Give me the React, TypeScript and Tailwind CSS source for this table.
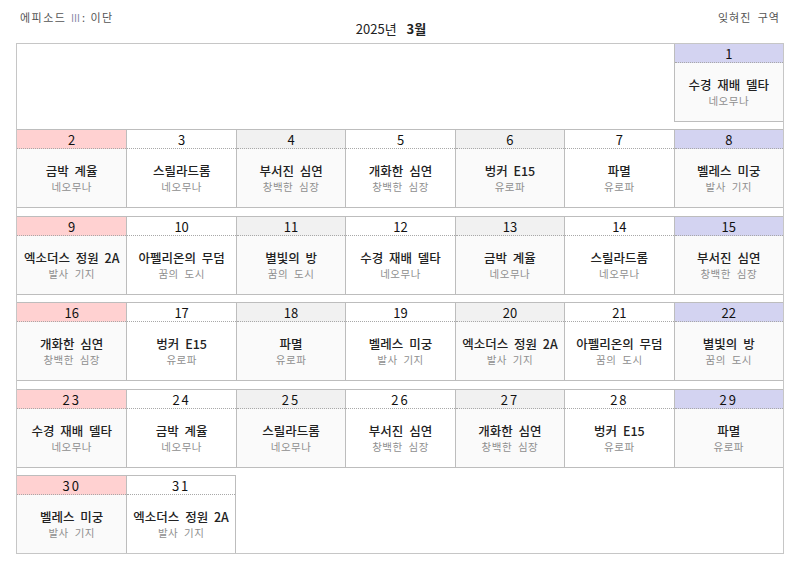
import React from 'react';

const PLACES: { name: string; area: string }[] = [
  { name: '수경 재배 델타', area: '네오무나' },
  { name: '금박 계율', area: '네오무나' },
  { name: '스릴라드롬', area: '네오무나' },
  { name: '부서진 심연', area: '창백한 심장' },
  { name: '개화한 심연', area: '창백한 심장' },
  { name: '벙커 E15', area: '유로파' },
  { name: '파멸', area: '유로파' },
  { name: '벨레스 미궁', area: '발사 기지' },
  { name: '엑소더스 정원 2A', area: '발사 기지' },
  { name: '아펠리온의 무덤', area: '꿈의 도시' },
  { name: '별빛의 방', area: '꿈의 도시' },
];

// March 2025 starts on Saturday
const FIRST_COL = 6;
const DAYS = 31;

const headBg = (col: number) => {
  if (col === 0) return 'bg-[#ffd1d1]';
  if (col === 6) return 'bg-[#d3d3f1]';
  if (col === 2 || col === 4) return 'bg-[#f1f1f1]';
  return 'bg-white';
};

interface DayCellProps {
  day: number;
  col: number;
  firstRow: boolean;
  lastRow: boolean;
  lastDay: boolean;
}

const DayCell: React.FC<DayCellProps> = ({ day, col, firstRow, lastRow, lastDay }) => {
  const place = PLACES[(day - 1) % PLACES.length];
  const tinted = col % 2 === 0;
  return (
    <div
      className={`flex flex-col border-[#bdbdbd] ${firstRow ? '' : 'border-t'} ${lastRow ? '' : 'border-b'} ${
        col > 0 ? 'border-l' : ''
      } ${lastDay && col < 6 ? 'border-r' : ''}`}
    >
      <div
        className={`h-[19px] pt-px flex items-center justify-center text-[13px] leading-none text-[#111] border-b border-dotted border-[#a8a8a8] ${headBg(col)} ${
          day >= 23 ? 'tracking-[2px]' : ''
        }`}
      >
        {day}
      </div>
      <div className={`flex-1 flex flex-col items-center justify-center ${tinted ? 'bg-[#fafafa]' : 'bg-white'}`}>
        <div className="text-[12.5px] leading-[17px] font-medium text-[#222] [word-spacing:3px] whitespace-nowrap">
          {place.name}
        </div>
        <div className="text-[10.5px] leading-[15px] text-[#8f8f8f] tracking-[0.5px] [word-spacing:3px] whitespace-nowrap">
          {place.area}
        </div>
      </div>
    </div>
  );
};

const App: React.FC = () => {
  const slots: (number | null)[] = [];
  for (let i = 0; i < FIRST_COL; i++) slots.push(null);
  for (let d = 1; d <= DAYS; d++) slots.push(d);
  while (slots.length % 7 !== 0) slots.push(null);

  const weeks: (number | null)[][] = [];
  for (let i = 0; i < slots.length; i += 7) weeks.push(slots.slice(i, i + 7));

  return (
    <div className="w-[800px] h-[566px] bg-white font-['Noto_Sans_CJK_KR','Noto_Sans',sans-serif]">
      <div className="h-[43px] grid grid-cols-[1fr_auto_1fr] px-5">
        <div className="pt-[9px] text-[11px] text-[#555] tracking-[1.5px]">
          에피소드 <span className="text-[#8a8aa8] text-[10px]">Ⅲ</span>: 이단
        </div>
        <div className="pt-[19px] pr-[18px] flex items-baseline gap-[10px] text-[13px] text-[#222]">
          <span>2025년</span>
          <span className="font-bold">3월</span>
        </div>
        <div className="pt-[9px] text-right text-[11px] text-[#555] tracking-[1px] [word-spacing:3px]">잊혀진 구역</div>
      </div>

      <div className="ml-4 w-[768px] h-[511px] border border-[#c6c6c6] flex flex-col justify-between">
        {weeks.map((week, wi) => (
          <div key={wi} className={`grid grid-cols-7 ${wi === 0 || wi === weeks.length - 1 ? 'h-[78px]' : 'h-[79px]'}`}>
            {week.map((day, ci) =>
              day === null ? (
                <div key={ci} />
              ) : (
                <DayCell
                  key={ci}
                  day={day}
                  col={ci}
                  firstRow={wi === 0}
                  lastRow={wi === weeks.length - 1}
                  lastDay={day === DAYS}
                />
              )
            )}
          </div>
        ))}
      </div>
    </div>
  );
};

export default App;
